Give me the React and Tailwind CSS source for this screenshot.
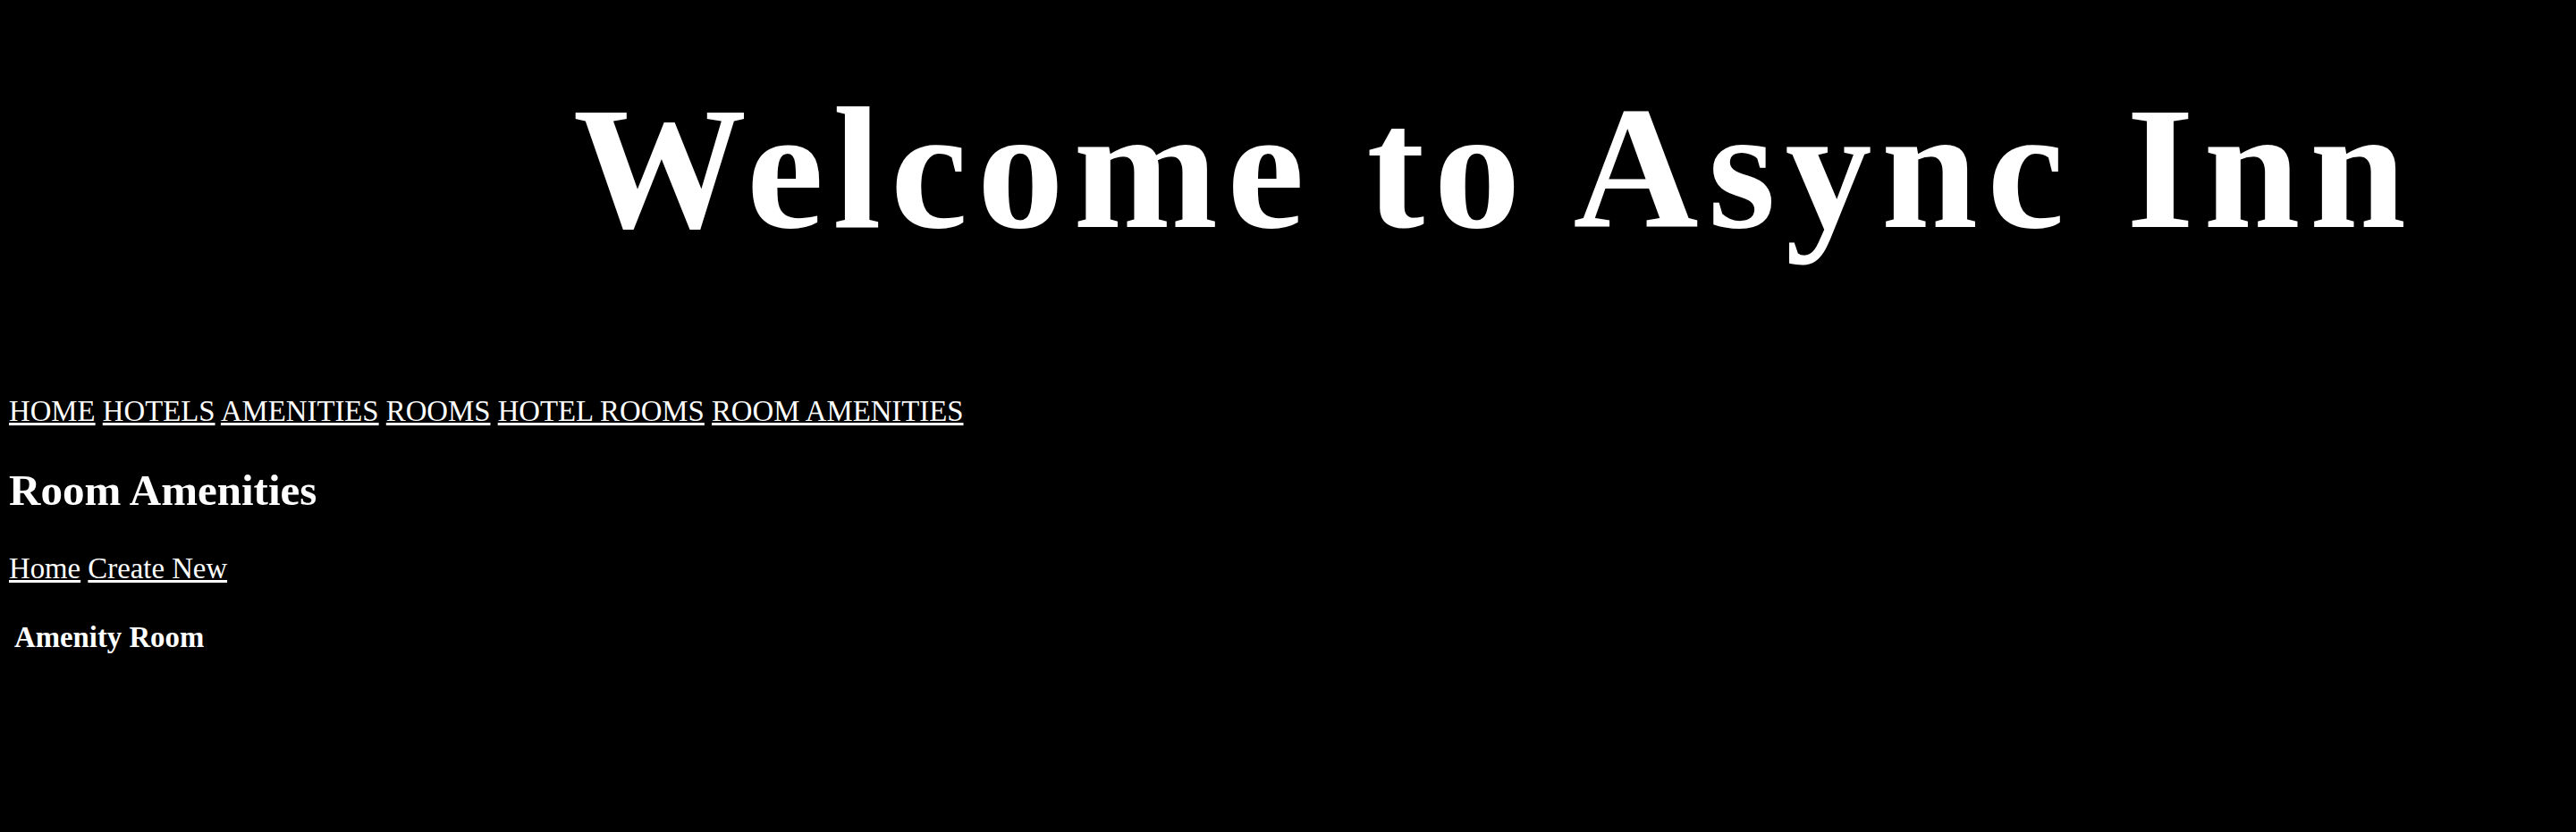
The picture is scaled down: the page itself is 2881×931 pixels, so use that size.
import React from 'react';

const navLinks = ['HOME', 'HOTELS', 'AMENITIES', 'ROOMS', 'HOTEL ROOMS', 'ROOM AMENITIES'];

const serif = "font-['Liberation_Serif','Times_New_Roman',serif]";

export default function App() {
  return (
    <div className={`min-h-screen w-full bg-black text-white ${serif}`}>
      {/* Header */}
      <header className="pt-[92px] pl-[641px]">
        <h1 className="h-[194px] whitespace-nowrap text-[194px] font-bold leading-none tracking-[10.6px]">
          Welcome to Async Inn
        </h1>
      </header>

      {/* Nav */}
      <nav className="mt-[156px] pl-[10px] text-[32.8px] leading-[37px]">
        {navLinks.map((link, i) => (
          <React.Fragment key={link}>
            <a href="#" className="text-white underline">{link}</a>
            {i < navLinks.length - 1 && ' '}
          </React.Fragment>
        ))}
      </nav>

      <main className="pl-[10px]">
        <h2 className="mt-[42px] text-[49px] font-bold leading-[55px]">Room Amenities</h2>

        <div className="mt-[42px] text-[32.8px] leading-[37px]">
          <a href="#" className="text-white underline">Home</a>{' '}
          <a href="#" className="text-white underline">Create New</a>
        </div>

        {/* Table header */}
        <div className="mt-[40px] pl-[6px] text-[32.8px] font-bold leading-[37px]">
          Amenity Room
        </div>
      </main>
    </div>
  );
}
